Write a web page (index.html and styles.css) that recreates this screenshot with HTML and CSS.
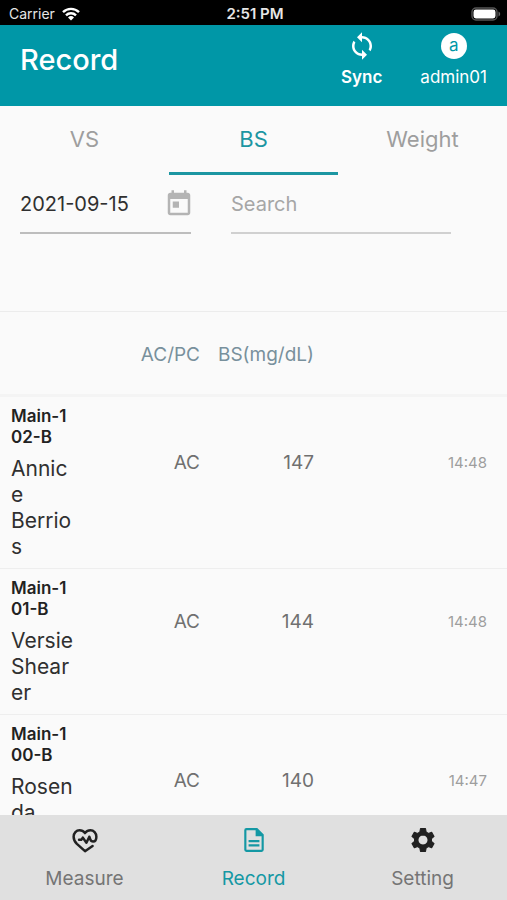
FILE: index.html
```html
<!DOCTYPE html>
<html lang="en">
<head>
<meta charset="utf-8">
<meta name="viewport" content="width=device-width, initial-scale=1">
<title>Record</title>
<link rel="stylesheet" href="styles.css">
</head>
<body>
<div class="status-bar">
  <div class="status-carrier">
    <span>Carrier</span>
    <svg class="wifi" viewBox="0 0 18 14" aria-hidden="true">
      <g fill="none" stroke="#fff" stroke-width="2.4">
        <path d="M1 5.2a11.4 11.4 0 0 1 16 0"/>
        <path d="M4 8.4a7 7 0 0 1 10 0"/>
      </g>
      <path fill="#fff" d="M9 13.6 6 10.5a4.3 4.3 0 0 1 6 0z"/>
    </svg>
  </div>
  <span class="status-time">2:51 PM</span>
  <div class="status-battery">
    <svg class="battery" viewBox="0 0 30 14" aria-hidden="true">
      <rect x="1" y="1" width="25" height="12" rx="4" fill="none" stroke="#555" stroke-width="1.4"/>
      <rect x="2.5" y="2.5" width="22" height="9" rx="2.4" fill="#fff"/>
      <path fill="#666" d="M27.5 4.5v5c1-.4 1.7-1.3 1.7-2.5s-.7-2.1-1.7-2.5z"/>
    </svg>
  </div>
</div>

<header class="app-header">
  <h1>Record</h1>
  <div class="header-actions">
    <button class="header-action sync" type="button">
      <svg class="sync-icon" viewBox="0 0 24 24" aria-hidden="true"><path fill="currentColor" d="M12 4V1L8 5l4 4V6c3.31 0 6 2.69 6 6 0 1.01-.25 1.97-.7 2.8l1.46 1.46C19.54 15.03 20 13.57 20 12c0-4.42-3.58-8-8-8zm0 14c-3.31 0-6-2.69-6-6 0-1.01.25-1.97.7-2.8L5.24 7.74C4.46 8.97 4 10.43 4 12c0 4.42 3.58 8 8 8v3l4-4-4-4v3z"/></svg>
      <span>Sync</span>
    </button>
    <button class="header-action" type="button">
      <span class="avatar">a</span>
      <span>admin01</span>
    </button>
  </div>
</header>

<main>
  <div class="tabs" role="tablist">
    <button type="button" role="tab" aria-selected="false">VS</button>
    <button type="button" role="tab" aria-selected="true">BS</button>
    <button type="button" role="tab" aria-selected="false">Weight</button>
  </div>

  <form class="filters">
    <div class="field date-field">
      <input type="text" value="2021-09-15" aria-label="Date">
      <button type="button" aria-label="Pick a date">
        <svg viewBox="0 0 24 24" aria-hidden="true"><path fill="currentColor" d="M19 3h-1V1h-2v2H8V1H6v2H5c-1.11 0-1.99.9-1.99 2L3 19c0 1.1.89 2 2 2h14c1.1 0 2-.9 2-2V5c0-1.1-.9-2-2-2zm0 16H5V8h14v11zM7 10h5v5H7z"/></svg>
      </button>
    </div>
    <div class="field search-field">
      <input type="search" placeholder="Search" aria-label="Search">
    </div>
  </form>

  <table class="records">
    <colgroup><col class="col-person"><col class="col-meal"><col class="col-sugar"><col></colgroup>
    <thead>
      <tr><td></td><th scope="col">AC/PC</th><th scope="col">BS(mg/dL)</th><td></td></tr>
    </thead>
    <tbody>
      <tr>
        <th scope="row"><span class="room">Main-102-B</span><span class="name">Annice Berrios</span></th>
        <td>AC</td><td>147</td><td class="time">14:48</td>
      </tr>
      <tr>
        <th scope="row"><span class="room">Main-101-B</span><span class="name">Versie Shearer</span></th>
        <td>AC</td><td>144</td><td class="time">14:48</td>
      </tr>
      <tr class="tall">
        <th scope="row"><span class="room">Main-100-B</span><span class="name">Rosenda</span></th>
        <td>AC</td><td>140</td><td class="time">14:47</td>
      </tr>
    </tbody>
  </table>
</main>

<nav class="bottom-nav">
  <a href="#measure">
    <svg class="dark" viewBox="0 0 24 24" aria-hidden="true"><g fill="none" stroke="currentColor" stroke-width="2.3" stroke-linecap="round" stroke-linejoin="round"><path d="M19 17.5 12 22.300 4.500 15.600C2.800 13.900 1.500 11.700 1.500 9 1.500 5.500 4 3 7 3c2 0 3.700 1 5 2.600C13.300 4 15 3 17 3c3 0 5.500 2.500 5.500 6 0 2.600-1.200 4.400-3 4.400-1.400 0-2.200-.7-2.700-2.200L16 9l-2.700 5.500L10 9.800l-1.400 1.900H6.500"/></g></svg>
    <span>Measure</span>
  </a>
  <a href="#record" aria-current="page">
    <svg viewBox="0 0 24 24" aria-hidden="true"><path fill="currentColor" fill-rule="evenodd" d="M5 1h10l6 6v14a2 2 0 0 1-2 2H5a2 2 0 0 1-2-2V3a2 2 0 0 1 2-2zm0 2v18h14V8.500h-5.500V3zm2 9h10v2H7zm0 4h10v2H7z"/></svg>
    <span>Record</span>
  </a>
  <a href="#setting">
    <svg class="dark" viewBox="0 0 24 24" aria-hidden="true"><path fill="currentColor" stroke="currentColor" stroke-linejoin="round" fill-rule="evenodd" d="M9.700 1.500h4.600l.6 3.200 2.100 1.200 3-1.100 2.200 3.900-2.400 2.100v2.400l2.400 2.100-2.200 3.900-3-1.100-2.100 1.200-.6 3.200H9.700l-.6-3.200-2.100-1.200-3 1.100-2.200-3.900 2.400-2.100v-2.400L1.800 8.700 4 4.800l3 1.100 2.100-1.200zM12 7.300a4.700 4.700 0 1 0 0 9.400 4.700 4.700 0 0 0 0-9.400z"/></svg>
    <span>Setting</span>
  </a>
</nav>
</body>
</html>
```

FILE: styles.css
```css
* { box-sizing: border-box; }

body {
  margin: 0;
  height: 100vh;
  display: flex;
  flex-direction: column;
  background: #fafafa;
  color: #303030;
  font-family: Inter, "Liberation Sans", sans-serif;
  font-size: 19px;
}

button, input {
  margin: 0;
  padding: 0;
  border: 0;
  background: none;
  color: inherit;
  font: inherit;
}

svg { display: block; }

.status-bar {
  display: grid;
  grid-template-columns: 1fr auto 1fr;
  align-items: center;
  flex: none;
  height: 25px;
  padding: 2px 6px 0 9px;
  background: #000;
  color: #e6e6e6;
  font-size: 14px;
}

.status-carrier { display: flex; align-items: center; gap: 7px; }
.status-time { font-size: 15px; font-weight: 600; line-height: 20px; }
.status-battery { display: flex; justify-content: flex-end; }
.wifi { width: 18px; height: 14px; }
.battery { width: 30px; height: 14px; }

.app-header {
  display: flex;
  justify-content: space-between;
  flex: none;
  height: 81px;
  padding: 0 20px;
  background: #0097a7;
  color: #fff;
}

h1 {
  margin: 0;
  font-size: 29px;
  font-weight: 500;
  line-height: 70px;
}

.header-actions { display: flex; gap: 38px; }

.header-action {
  display: flex;
  flex-direction: column;
  align-items: center;
  gap: 1px;
  padding-top: 6px;
  font-size: 17px;
  line-height: 30px;
}

.sync { font-weight: 600; }
.sync-icon { width: 30px; height: 30px; }

.avatar {
  width: 26px;
  height: 26px;
  margin: 2px;
  border-radius: 50%;
  background: #fff;
  color: #0097a7;
  font-size: 17px;
  line-height: 25px;
}

main { flex: 1; min-height: 0; overflow: hidden; }

.tabs { display: grid; grid-template-columns: repeat(3, 1fr); }

.tabs button {
  height: 69px;
  border-bottom: 3px solid transparent;
  color: #9e9e9e;
  font-size: 22px;
}

.tabs [aria-selected="true"] { border-color: #1c96a2; color: #1c96a2; }

.filters {
  display: flex;
  gap: 40px;
  height: 136px;
  padding: 0 56px 0 20px;
}

.field {
  display: flex;
  align-items: center;
  height: 59px;
  border-bottom: 2px solid #bdbdbd;
}

.field input { width: 100%; min-width: 0; outline: 0; font-size: 20px; }
.field input::placeholder { color: #a6a6a6; opacity: 1; }
.date-field { flex: 171; }
.search-field { flex: 220; border-color: #d0d0d0; }
.date-field button { flex: none; margin-right: -3px; color: #b4b4b4; }
.date-field svg { width: 30px; height: 30px; }

.records {
  width: 100%;
  border-collapse: separate;
  border-spacing: 0;
  border-top: 1px solid #ececec;
  table-layout: fixed;
  text-align: right;
}

.col-person { width: 80px; }
.col-meal { width: 120px; }
.col-sugar { width: 114px; }

.records th, .records td { padding: 0; font-weight: 400; }

.records thead th, .records thead td {
  height: 85px;
  padding-top: 2px;
  border-bottom: 3px solid #f4f4f4;
  color: #78909c;
}

.records tbody th, .records tbody td { border-bottom: 1px solid #eee; }
.records tbody td { padding-bottom: 40px; color: #707070; }

.records tbody th {
  padding: 9px 3px 8px 11px;
  text-align: left;
  vertical-align: top;
}

.room {
  display: block;
  margin-bottom: 8px;
  color: #222;
  font-size: 17px;
  font-weight: 600;
  line-height: 21px;
  word-break: break-all;
}

.name {
  display: block;
  font-size: 21px;
  line-height: 26px;
  overflow-wrap: anywhere;
}

.records tbody .time { padding-right: 20px; color: #9e9e9e; font-size: 15px; }
.tall { height: 172px; }

.bottom-nav {
  display: grid;
  grid-template-columns: repeat(3, 1fr);
  flex: none;
  height: 85px;
  background: #e0e0e0;
}

.bottom-nav a {
  display: flex;
  flex-direction: column;
  align-items: center;
  gap: 12px;
  padding-top: 12px;
  color: #757575;
  line-height: 28px;
  text-decoration: none;
}

.bottom-nav svg { width: 26px; height: 26px; }
.bottom-nav .dark { color: #212121; }
.bottom-nav [aria-current] { color: #1498a4; }
```
